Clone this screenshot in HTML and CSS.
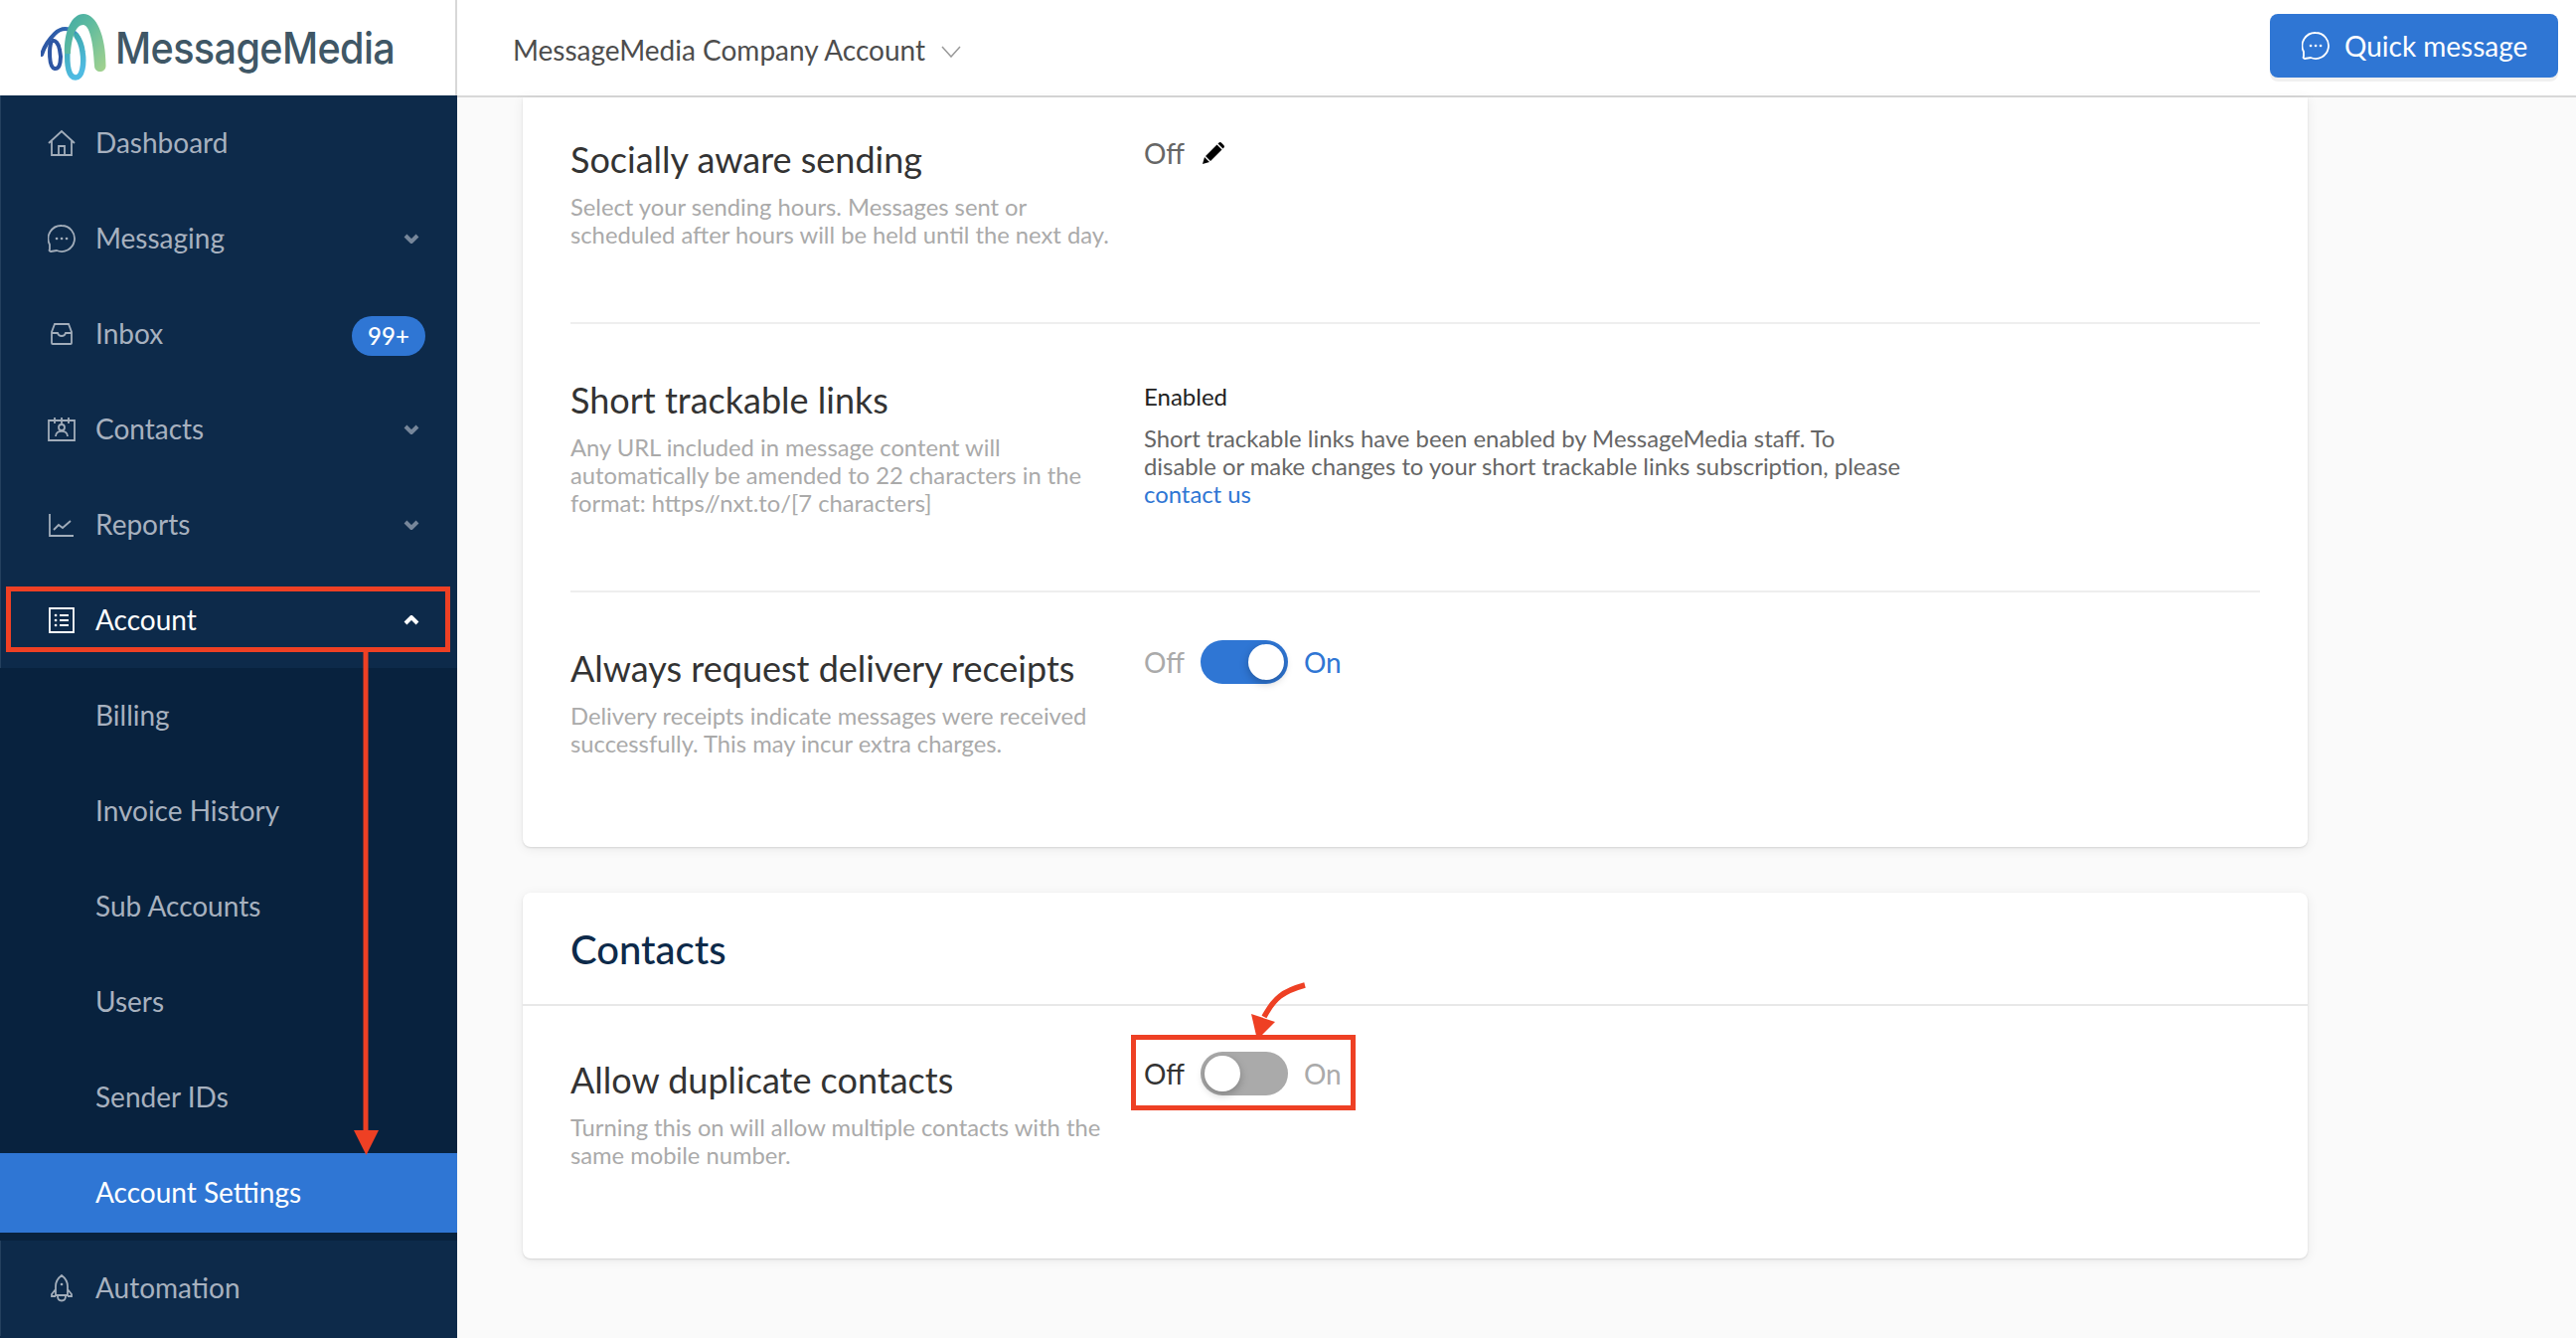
FILE: index.html
```html
<!DOCTYPE html>
<html lang="en">
<head>
    <meta charset="UTF-8">
    <title>Account Settings - MessageMedia</title>
    <link rel="stylesheet" href="styles.css">
</head>
<body>
    <svg width="0" height="0" class="defs">
        <defs>
            <linearGradient id="logoGreen" x1="0" y1="0" x2="1" y2="1">
                <stop offset="0" stop-color="#3fa9a6"/>
                <stop offset="0.4" stop-color="#5fbb9f"/>
                <stop offset="1" stop-color="#a6d38d"/>
            </linearGradient>
            <linearGradient id="logoBlue" x1="0" y1="0" x2="1" y2="0">
                <stop offset="0" stop-color="#2d56a3"/>
                <stop offset="0.6" stop-color="#2f62ad"/>
                <stop offset="1" stop-color="#3d94cf"/>
            </linearGradient>
            <linearGradient id="logoTeal" x1="0" y1="0" x2="0.3" y2="1">
                <stop offset="0" stop-color="#3ea8a8"/>
                <stop offset="1" stop-color="#4fbbe2"/>
            </linearGradient>
        </defs>
    </svg>

    <div class="app">
        <aside class="sidebar">
            <div class="logo">
                <svg class="logo-mark" viewBox="0 0 68 68" width="68" height="68">
                    <path d="M38 24C33 14 22 12 14 20C8 26 3 34 1 41" fill="none" stroke="url(#logoBlue)" stroke-width="4" stroke-linecap="round"/>
                    <path d="M11 27C8 34 8 54 14 55C20 56 21 44 19 36C18 30 15 26 11 27" fill="none" stroke="#2d56a3" stroke-width="4"/>
                    <path d="M27 36C26 52 28 64 35 64C42 64 44 50 42 38C41 30 39 26 36 22" fill="none" stroke="url(#logoTeal)" stroke-width="5.500" stroke-linecap="round"/>
                    <path d="M24 40C23 18 31 0 43 0C56 0 65.500 22 65.500 52C65.500 60 54 60 54 52C53 32 50 12 43 11C35 11 31 24 30 40Z" fill="url(#logoGreen)"/>
                </svg>
                <span class="logo-text">MessageMedia</span>
            </div>
            <nav class="nav">
                <a class="nav-item">
                    <svg class="nav-icon" viewBox="0 0 28 28"><path d="M1 14 14 2l13 12M4 12v14h20V12M11 26v-9h6v9"/></svg>
                    <span class="nav-label">Dashboard</span>
                </a>
                <a class="nav-item">
                    <svg class="nav-icon" viewBox="0 0 28 28"><path d="M14 1a13 13 0 1 1-5 25l-6 1c-1 0-2-1-1-2v-5A13 13 0 0 1 14 1z"/><path class="dots" d="M9 14h.1M14 14h.1M19 14h.1"/></svg>
                    <span class="nav-label">Messaging</span>
                    <svg class="nav-caret" viewBox="0 0 16 10"><path d="M2 2l6 6 6-6"/></svg>
                </a>
                <a class="nav-item">
                    <svg class="nav-icon" viewBox="0 0 28 28"><path d="M7 4h14l3 8v11a1 1 0 0 1-1 1H5a1 1 0 0 1-1-1V12zM4 13h6c1 4 7 4 8 0h6"/></svg>
                    <span class="nav-label">Inbox</span>
                    <span class="badge">99+</span>
                </a>
                <a class="nav-item">
                    <svg class="nav-icon" viewBox="0 0 28 28"><path d="M1 5h26v20H1zM7 2v6M14 2v6M21 2v6"/><circle cx="14" cy="12" r="3"/><path d="M8 21c0-7 12-7 12 0"/></svg>
                    <span class="nav-label">Contacts</span>
                    <svg class="nav-caret" viewBox="0 0 16 10"><path d="M2 2l6 6 6-6"/></svg>
                </a>
                <a class="nav-item">
                    <svg class="nav-icon" viewBox="0 0 28 28"><path d="M2 3v22h24M6 19l5-5 4 3 8-7"/></svg>
                    <span class="nav-label">Reports</span>
                    <svg class="nav-caret" viewBox="0 0 16 10"><path d="M2 2l6 6 6-6"/></svg>
                </a>
                <a class="nav-item nav-item-open">
                    <svg class="nav-icon" viewBox="0 0 28 28"><path d="M2 2h24v24H2zM12 9h9M12 14h9M12 19h9"/><path class="dots" d="M8 9h.1M8 14h.1M8 19h.1"/></svg>
                    <span class="nav-label">Account</span>
                    <svg class="nav-caret" viewBox="0 0 16 10"><path d="M2 8l6-6 6 6"/></svg>
                </a>
                <div class="subnav">
                    <a class="sub-item">Billing</a>
                    <a class="sub-item">Invoice History</a>
                    <a class="sub-item">Sub Accounts</a>
                    <a class="sub-item">Users</a>
                    <a class="sub-item">Sender IDs</a>
                    <a class="sub-item sub-item-active">Account Settings</a>
                </div>
                <a class="nav-item">
                    <svg class="nav-icon" viewBox="0 0 28 28"><path d="M14 1c-4 3-6 7-6 11v9h12v-9c0-4-2-8-6-11zM8 15l-4 5v2h4M20 15l4 5v2h-4M10 22c0 6 8 6 8 0"/><path class="dots" d="M14 10h.1"/></svg>
                    <span class="nav-label">Automation</span>
                </a>
            </nav>
        </aside>

        <div class="page">
            <header class="topbar">
                <div class="account-select">
                    <span>MessageMedia Company Account</span>
                    <svg class="account-caret" viewBox="0 0 20 12"><path d="M1 1l9 10 9-10"/></svg>
                </div>
                <button class="quick-btn">
                    <svg class="quick-icon" viewBox="0 0 28 28"><path d="M14 1a13 13 0 1 1-5 25l-6 1c-1 0-2-1-1-2v-5A13 13 0 0 1 14 1z"/><path class="dots" d="M9 14h.1M14 14h.1M19 14h.1"/></svg>
                    Quick message
                </button>
            </header>

            <main class="content">
                <section class="card card-top">
                    <div class="setting setting-social">
                        <div class="setting-info">
                            <h3>Socially aware sending</h3>
                            <p>Select your sending hours. Messages sent or<br>scheduled after hours will be held until the next day.</p>
                        </div>
                        <div class="setting-value">
                            <div class="off-row">
                                <span class="off-text">Off</span>
                                <svg class="pencil" viewBox="0 0 22 22">
                                    <path d="M0 22l2-7 5 5zM3 14 14.500 2.500l5 5L8 19zM15.500 1.500l.8-.8a2 2 0 0 1 2.800 0l2.200 2.200a2 2 0 0 1 0 2.800l-.8.8z"/>
                                </svg>
                            </div>
                        </div>
                    </div>
                    <div class="setting setting-links">
                        <div class="setting-info">
                            <h3>Short trackable links</h3>
                            <p>Any URL included in message content will<br>automatically be amended to 22 characters in the<br>format: https//nxt.to/[7 characters]</p>
                        </div>
                        <div class="setting-value">
                            <div class="enabled">Enabled</div>
                            <p class="links-note">Short trackable links have been enabled by MessageMedia staff. To<br>disable or make changes to your short trackable links subscription, please<br><a class="link">contact us</a></p>
                        </div>
                    </div>
                    <div class="setting setting-receipts">
                        <div class="setting-info">
                            <h3>Always request delivery receipts</h3>
                            <p>Delivery receipts indicate messages were received<br>successfully. This may incur extra charges.</p>
                        </div>
                        <div class="setting-value">
                            <div class="toggle-row">
                                <span class="toggle-label">Off</span>
                                <span class="toggle toggle-on"><span class="knob"></span></span>
                                <span class="toggle-label label-on">On</span>
                            </div>
                        </div>
                    </div>
                </section>

                <section class="card card-contacts">
                    <h2 class="card-title">Contacts</h2>
                    <div class="setting setting-duplicate">
                        <div class="setting-info">
                            <h3>Allow duplicate contacts</h3>
                            <p>Turning this on will allow multiple contacts with the<br>same mobile number.</p>
                        </div>
                        <div class="setting-value">
                            <div class="toggle-row">
                                <span class="toggle-label label-off">Off</span>
                                <span class="toggle"><span class="knob"></span></span>
                                <span class="toggle-label">On</span>
                            </div>
                        </div>
                    </div>
                </section>
            </main>
        </div>
    </div>

    <!-- red annotations on top of the screenshot -->
    <svg class="annotations" viewBox="0 0 2592 1346">
        <rect x="8.500" y="592.500" width="442" height="61" fill="none" stroke="#ee4024" stroke-width="5"/>
        <path d="M368 656V1138" stroke="#ee4024" stroke-width="5" fill="none"/>
        <path d="M356 1137h25l-12.500 25z" fill="#ee4024"/>
        <rect x="1140.500" y="1043.500" width="221" height="71" fill="none" stroke="#ee4024" stroke-width="5"/>
        <path d="M1313 991C1291 997 1282 1004 1272 1023" stroke="#ee4024" stroke-width="5.500" fill="none"/>
        <path d="M1259 1020l24 8-18 18z" fill="#ee4024"/>
    </svg>
</body>
</html>
```

FILE: styles.css
```css
* {
    box-sizing: border-box;
}

body {
    margin: 0;
    height: 1346px;
    overflow: hidden;
    font-family: Lato, "Open Sans", sans-serif;
    color: #333;
    background-color: #fafafa;
    position: relative;
}

.defs {
    position: absolute;
}

.app {
    display: flex;
    height: 100%;
}

/* Sidebar */
.sidebar {
    width: 460px;
    flex-shrink: 0;
    display: flex;
    flex-direction: column;
    background: #0d2a4a;
    overflow: hidden;
}

.logo {
    height: 96px;
    flex-shrink: 0;
    display: flex;
    align-items: center;
    gap: 7px;
    padding: 0 0 0 41px;
    background: #fff;
    border-right: 2px solid #d8d8d8;
}

.logo-text {
    font-family: Inter, Roboto, sans-serif;
    font-size: 44px;
    font-weight: 500;
    letter-spacing: -0.7px;
    color: #3f5766;
    transform: scaleX(0.9);
    transform-origin: left center;
    white-space: nowrap;
}

.nav {
    display: flex;
    flex-direction: column;
    border-left: 1px solid #24405e;
}

.nav-item {
    height: 96px;
    display: flex;
    align-items: center;
    padding: 0 32px 0 47px;
    font-size: 28px;
    color: #a7b1bf;
}

.nav-label {
    margin-bottom: 2px;
}

.nav-icon {
    width: 28px;
    height: 28px;
    margin-right: 20px;
    flex-shrink: 0;
    fill: none;
    stroke: #a2adba;
    stroke-width: 1.8;
}

.nav-icon .dots,
.quick-icon .dots {
    stroke-width: 2.6;
    stroke-linecap: round;
}

.nav-caret {
    width: 16px;
    height: 10px;
    margin-left: auto;
    margin-right: 6px;
    fill: none;
    stroke: #76869a;
    stroke-width: 4;
}

.badge {
    margin-left: auto;
    margin-top: 4px;
    width: 74px;
    height: 40px;
    border-radius: 20px;
    background: #2f76d4;
    color: #fff;
    font-size: 24px;
    font-weight: 500;
    text-align: center;
    line-height: 39px;
}

.nav-item-open {
    color: #fff;
}

.nav-item-open .nav-icon,
.nav-item-open .nav-caret {
    stroke: #fff;
}

.subnav {
    display: flex;
    flex-direction: column;
    background: #08223e;
    margin-left: -1px;
}

.sub-item {
    height: 80px;
    margin: 8px 0;
    padding-left: 96px;
    line-height: 78px;
    font-size: 28px;
    color: #a7b1bf;
}

.sub-item-active {
    background: #2f76d4;
    color: #fff;
}

/* Top bar */
.page {
    flex: 1;
    display: flex;
    flex-direction: column;
    min-width: 0;
}

.topbar {
    height: 98px;
    flex-shrink: 0;
    display: flex;
    align-items: center;
    justify-content: space-between;
    padding: 0 18px 0 56px;
    background: #fff;
    border-bottom: 2px solid #d8d8d8;
}

.account-select {
    display: flex;
    align-items: center;
    gap: 16px;
    font-size: 28px;
    color: #4d4d4d;
    padding-top: 3px;
}

.account-caret {
    width: 20px;
    height: 12px;
    margin-top: 4px;
    fill: none;
    stroke: #999;
    stroke-width: 1.5;
}

.quick-btn {
    width: 290px;
    height: 64px;
    margin-bottom: 4px;
    display: flex;
    align-items: center;
    gap: 15px;
    padding: 0 0 0 32px;
    border: none;
    border-radius: 8px;
    background: #2f76d4;
    box-shadow: 0 4px 0 #f0f0f0;
    color: #fff;
    font-family: inherit;
    font-size: 28px;
    white-space: nowrap;
}

.quick-icon {
    width: 28px;
    height: 28px;
    fill: none;
    stroke: #fff;
    stroke-width: 1.8;
}

/* Cards */
.content {
    padding: 0 0 0 66px;
    width: 1862px;
}

.card {
    background: #fff;
    box-shadow: 0 1px 2px rgba(0, 0, 0, 0.12), 0 2px 12px rgba(0, 0, 0, 0.07);
    padding: 0 48px;
}

.card-top {
    height: 754px;
    border-radius: 0 0 8px 8px;
}

.card-contacts {
    height: 368px;
    margin-top: 46px;
    border-radius: 8px;
    padding: 0;
}

.card-title {
    height: 114px;
    margin: 0;
    padding: 2px 48px 0;
    display: flex;
    align-items: center;
    font-size: 40px;
    font-weight: 500;
    color: #0d2a4a;
    border-bottom: 2px solid #e8e8e8;
}

.setting {
    display: flex;
    border-bottom: 2px solid #eee;
}

.setting:last-child {
    border-bottom: none;
}

.setting-social {
    height: 228px;
    padding-top: 40px;
}

.setting-links {
    height: 270px;
    padding-top: 54px;
}

.setting-receipts {
    padding-top: 54px;
}

.setting-duplicate {
    margin: 0 48px;
    padding-top: 52px;
}

.setting-info {
    width: 577px;
    flex-shrink: 0;
}

.setting-info h3 {
    margin: 0;
    font-size: 36px;
    line-height: 44px;
    font-weight: 400;
    color: #333;
}

.setting-info p {
    margin: 12px 0 0;
    font-size: 23.75px;
    line-height: 28px;
    color: #aaa;
}

.off-row {
    display: flex;
    align-items: center;
    gap: 18px;
    margin-top: -1px;
    font-size: 28px;
    color: #666;
}

.pencil {
    width: 22px;
    height: 22px;
    fill: #000;
}

.enabled {
    font-size: 24px;
    line-height: 28px;
    color: #222;
    margin-top: 5px;
}

.links-note {
    margin: 14px 0 0;
    font-size: 23.85px;
    line-height: 28px;
    color: #666;
}

.link {
    color: #2f76d4;
}

/* Toggles */
.toggle-row {
    display: flex;
    align-items: center;
    gap: 16px;
    font-size: 28px;
    color: #aaa;
    margin-top: -6px;
}

.label-on {
    color: #2f76d4;
}

.label-off {
    color: #333;
}

.toggle {
    width: 88px;
    height: 44px;
    border-radius: 22px;
    background: #aaa;
    padding: 4px;
    display: flex;
}

.toggle-on {
    background: #2f76d4;
    justify-content: flex-end;
}

.knob {
    width: 36px;
    height: 36px;
    border-radius: 50%;
    background: #fff;
    box-shadow: 0 3px 8px rgba(0, 0, 0, 0.25);
}

.annotations {
    position: absolute;
    top: 0;
    left: 0;
    width: 2592px;
    height: 1346px;
    pointer-events: none;
}
```
